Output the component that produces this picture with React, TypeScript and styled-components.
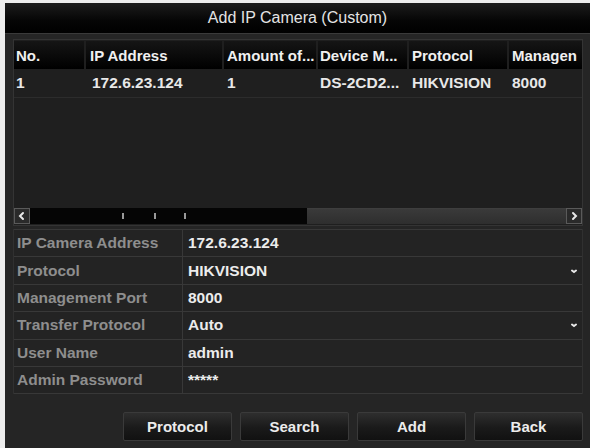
import React from "react";
import styled, { createGlobalStyle } from "styled-components";

const GlobalStyle = createGlobalStyle`
  html, body {
    margin: 0;
    padding: 0;
    background: #ededed;
    font-family: "Liberation Sans", Arial, sans-serif;
  }
`;

interface Column {
  title: string;
  width: number;
}

const columns: Column[] = [
  { title: "No.", width: 70 },
  { title: "IP Address", width: 136 },
  { title: "Amount of...", width: 92 },
  { title: "Device M...", width: 89 },
  { title: "Protocol", width: 98 },
  { title: "Managen", width: 73 },
];

const cameraRow = ["1", "172.6.23.124", "1", "DS-2CD2...", "HIKVISION", "8000"];

interface Field {
  label: string;
  value: string;
  select?: boolean;
}

const fields: Field[] = [
  { label: "IP Camera Address", value: "172.6.23.124" },
  { label: "Protocol", value: "HIKVISION", select: true },
  { label: "Management Port", value: "8000" },
  { label: "Transfer Protocol", value: "Auto", select: true },
  { label: "User Name", value: "admin" },
  { label: "Admin Password", value: "*****" },
];

const buttons = ["Protocol", "Search", "Add", "Back"];

const Chevron = ({ dir }: { dir: "left" | "right" | "down" }) => {
  const d =
    dir === "left" ? "M6 2 L3 5 L6 8" : dir === "right" ? "M4 2 L7 5 L4 8" : "M3 4.5 L5 6 L7 4.5";
  return (
    <svg width="10" height="10" viewBox="0 0 10 10">
      <path d={d} fill="none" stroke="#e8e8e8" strokeWidth="2" strokeLinecap="round" />
    </svg>
  );
};

const App = () => {
  return (
    <>
      <GlobalStyle />
      <Dialog>
        <TitleBar>Add IP Camera (Custom)</TitleBar>
        <Body>
          <TablePanel>
            <HeaderRow>
              {columns.map((c) => (
                <HeaderCell key={c.title} $w={c.width}>
                  {c.title}
                </HeaderCell>
              ))}
            </HeaderRow>
            <DataRow>
              {cameraRow.map((v, i) => (
                <DataCell key={i} $w={columns[i].width}>
                  {v}
                </DataCell>
              ))}
            </DataRow>
            <Empty />
            <ScrollBar>
              <ArrowBox>
                <Chevron dir="left" />
              </ArrowBox>
              <Thumb>
                <Tick />
                <Tick />
                <Tick />
              </Thumb>
              <Track />
              <ArrowBox>
                <Chevron dir="right" />
              </ArrowBox>
            </ScrollBar>
          </TablePanel>
          <Form>
            {fields.map((f) => (
              <FormRow key={f.label}>
                <Label>{f.label}</Label>
                <Value>
                  <span>{f.value}</span>
                  {f.select && <Chevron dir="down" />}
                </Value>
              </FormRow>
            ))}
          </Form>
          <ButtonBar>
            {buttons.map((b) => (
              <Button key={b}>{b}</Button>
            ))}
          </ButtonBar>
        </Body>
      </Dialog>
    </>
  );
};

export default App;

const Dialog = styled.div`
  margin: 3px 0 0 5px;
  width: 585px;
  height: 445px;
  background: #252525;
  display: flex;
  flex-direction: column;
  overflow: hidden;
`;

const TitleBar = styled.div`
  height: 30px;
  flex: none;
  background: linear-gradient(#1c1c1c, #050505 60%, #000);
  color: #e4e4e4;
  font-size: 16px;
  display: flex;
  align-items: center;
  justify-content: center;
  border-bottom: 1px solid #3a3a3a;
`;

const Body = styled.div`
  flex: 1;
  padding: 5px 7px 0 8px;
  display: flex;
  flex-direction: column;
`;

const TablePanel = styled.div`
  height: 185px;
  flex: none;
  background: #1f1f1f;
  border: 1px solid #343434;
  display: flex;
  flex-direction: column;
  overflow: hidden;
`;

const HeaderRow = styled.div`
  display: flex;
  height: 28px;
  flex: none;
  margin-top: 1px;
`;

const HeaderCell = styled.div<{ $w: number }>`
  width: ${(p) => p.$w}px;
  flex: none;
  box-sizing: border-box;
  padding-left: 3px;
  margin-right: 2px;
  background: linear-gradient(#151515, #000);
  color: #f0f0f0;
  font-size: 15px;
  font-weight: bold;
  display: flex;
  align-items: center;
  white-space: nowrap;
  overflow: hidden;
  &:first-child {
    padding-left: 2px;
  }
  &:nth-child(2) {
    padding-left: 4px;
  }
  &:nth-child(4) {
    padding-left: 2px;
  }
`;

const DataRow = styled.div`
  display: flex;
  height: 28px;
  flex: none;
  border-bottom: 1px solid #2c2c2c;
`;

const DataCell = styled.div<{ $w: number }>`
  width: ${(p) => p.$w + 2}px;
  flex: none;
  box-sizing: border-box;
  padding-left: 3px;
  color: #e8e8e8;
  font-size: 15.5px;
  font-weight: bold;
  display: flex;
  align-items: center;
  white-space: nowrap;
  overflow: hidden;
  &:first-child {
    padding-left: 2px;
  }
  &:nth-child(2) {
    padding-left: 6px;
  }
  &:nth-child(4) {
    padding-left: 2px;
  }
`;

const Empty = styled.div`
  flex: 1;
`;

const ScrollBar = styled.div`
  height: 16px;
  flex: none;
  display: flex;
  align-items: stretch;
  margin-bottom: 1px;
  background: #333;
`;

const ArrowBox = styled.div`
  width: 16px;
  box-sizing: border-box;
  border: 1px solid #5a5a5a;
  background: #2a2a2a;
  display: flex;
  align-items: center;
  justify-content: center;
`;

const Thumb = styled.div`
  width: 277px;
  background: #050505;
  display: flex;
  align-items: center;
  padding-left: 92px;
  box-sizing: border-box;
  & > *:nth-child(2) {
    margin-left: 30px;
  }
  & > *:nth-child(3) {
    margin-left: 28px;
  }
`;

const Tick = styled.span`
  width: 2px;
  height: 6px;
  background: #9a9a9a;
`;

const Track = styled.div`
  flex: 1;
  background: linear-gradient(#3a3a3a, #2e2e2e);
  border-top: 1px solid #3e3e3e;
`;

const Form = styled.div`
  margin-top: 3px;
  border-left: 1px solid #303030;
  border-right: 1px solid #303030;
  display: flex;
  flex-direction: column;
`;

const FormRow = styled.div`
  display: grid;
  grid-template-columns: 169px 1fr;
  height: 26.4px;
  border-bottom: 1px solid #383838;
  background: #232323;
  &:first-child {
    border-top: 1px solid #383838;
  }
`;

const Label = styled.div`
  color: #8e8e8e;
  font-size: 15.5px;
  font-weight: bold;
  display: flex;
  align-items: center;
  padding-left: 3px;
  border-right: 1px solid #383838;
  white-space: nowrap;
`;

const Value = styled.div`
  color: #ececec;
  font-size: 15.5px;
  font-weight: bold;
  display: flex;
  align-items: center;
  justify-content: space-between;
  padding: 0 3px 0 5px;
`;

const ButtonBar = styled.div`
  display: flex;
  justify-content: flex-end;
  gap: 8px;
  padding: 18px 0 0;
`;

const Button = styled.button`
  width: 109px;
  height: 29px;
  background: linear-gradient(#2e2e2e, #1a1a1a 55%, #111);
  border: 1px solid #3a3a3a;
  border-radius: 2px;
  color: #ececec;
  font-family: "Liberation Sans", Arial, sans-serif;
  font-size: 15px;
  font-weight: bold;
  padding: 0;
`;
